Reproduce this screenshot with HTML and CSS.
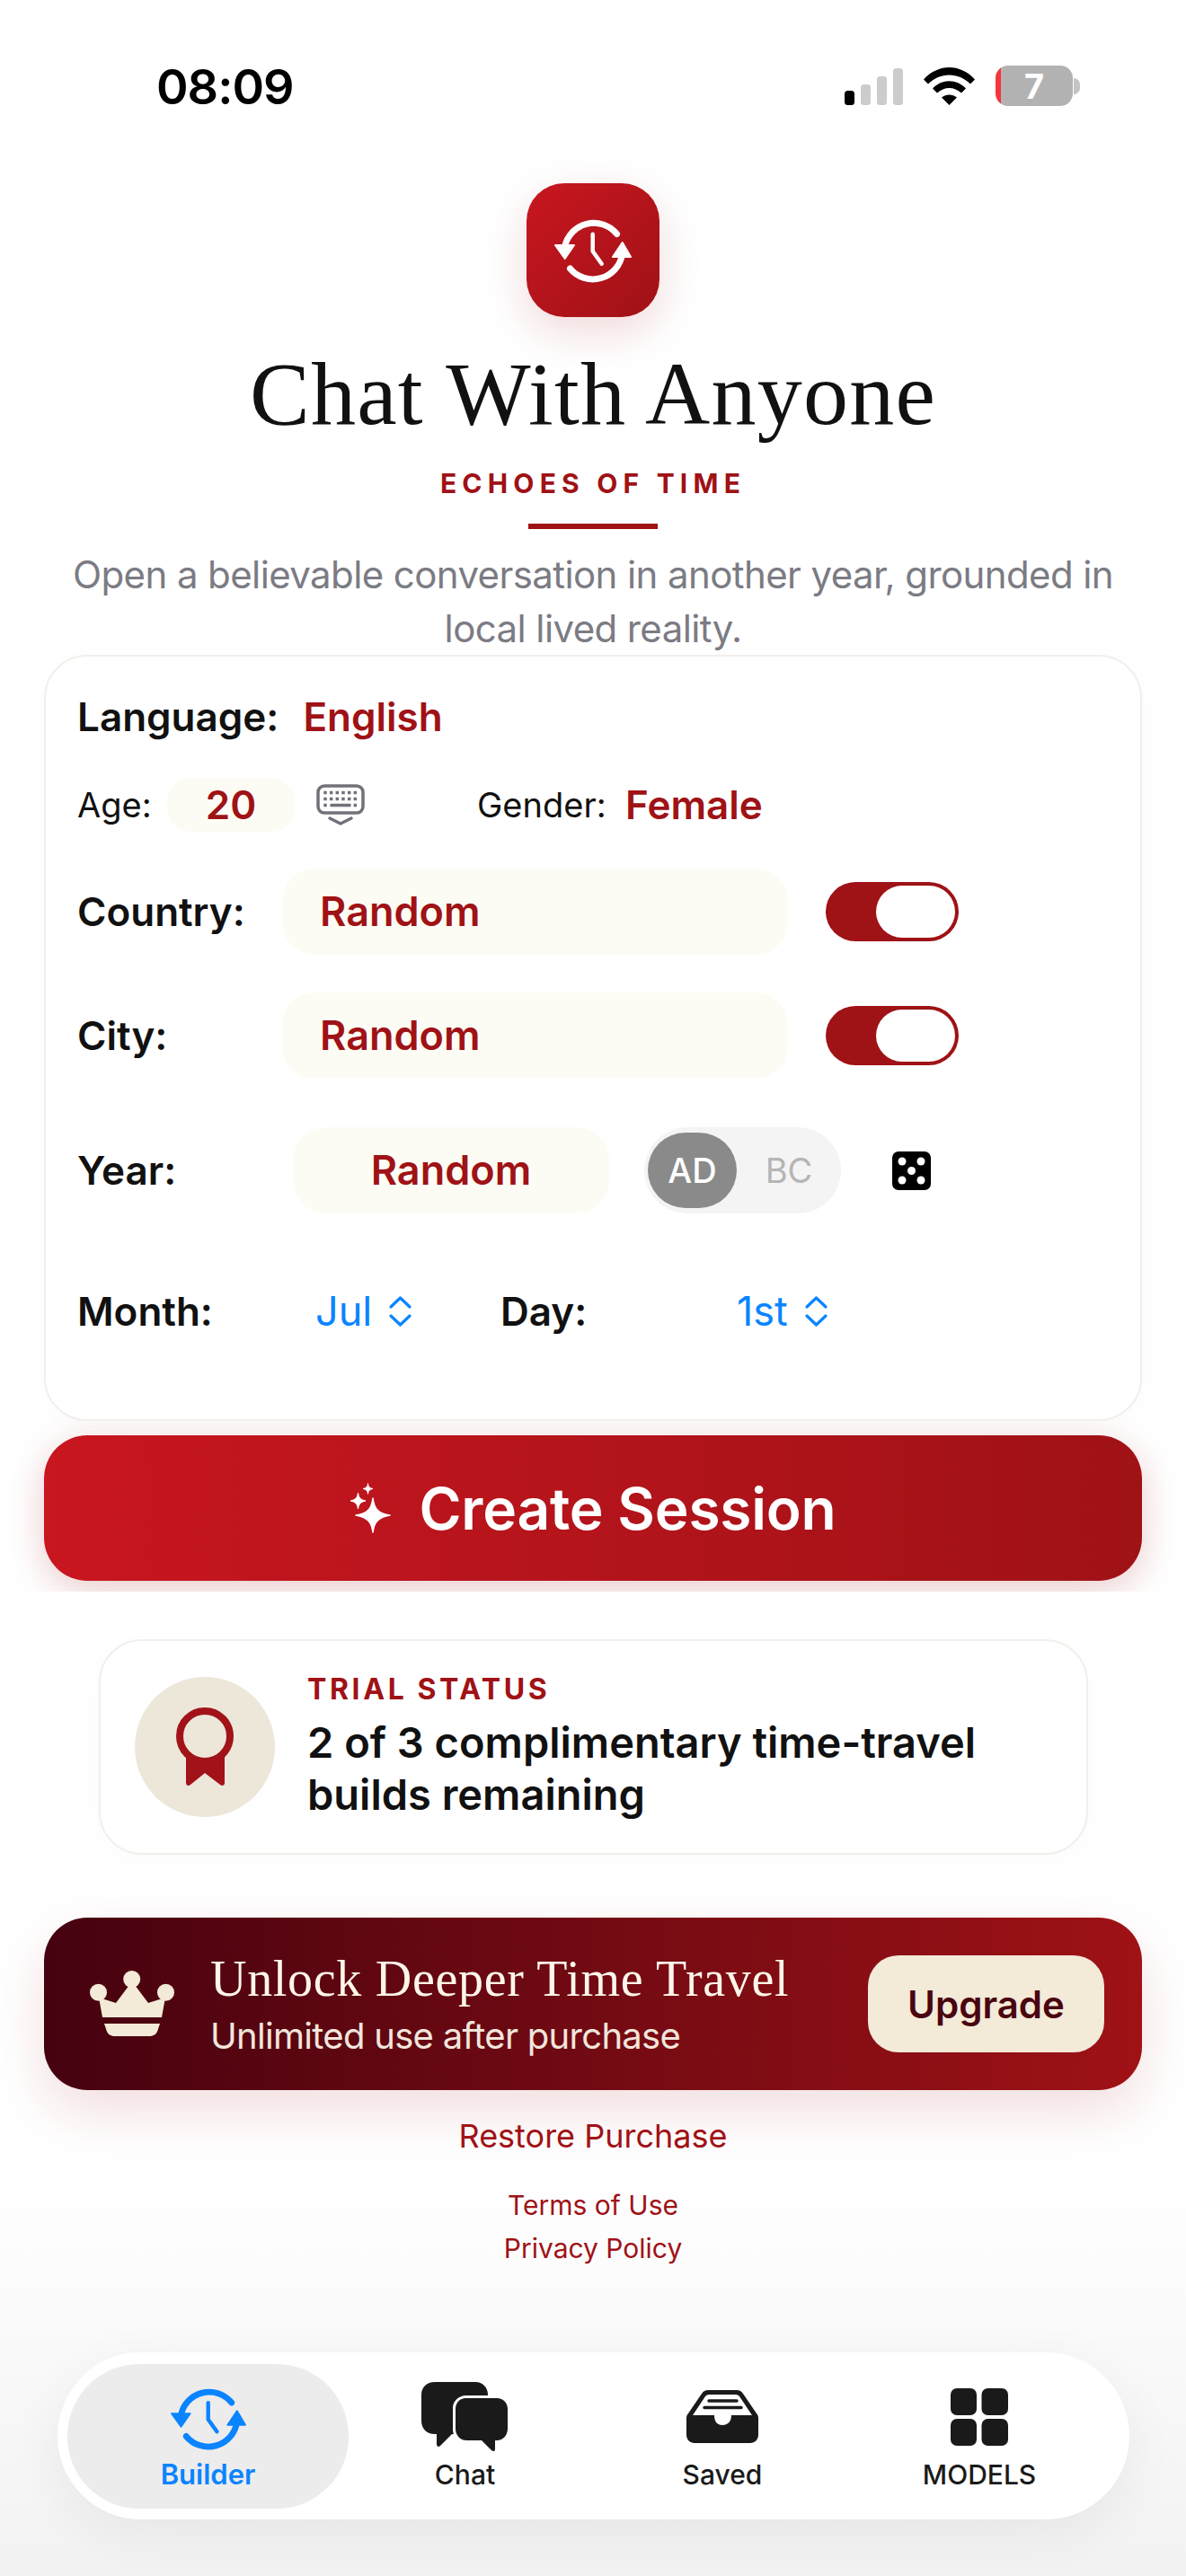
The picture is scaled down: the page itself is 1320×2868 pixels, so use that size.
FILE: index.html
```html
<!DOCTYPE html>
<html lang="en">
<head>
<meta charset="utf-8">
<title>Chat With Anyone</title>
<link rel="stylesheet" href="styles.css">
</head>
<body>
<svg class="defs" width="0" height="0" aria-hidden="true">
  <symbol id="history" viewBox="0 0 86 74">
    <path d="M69.5 18.5A33 33 0 0 0 11.5 33M17.5 57A33 33 0 0 0 75.5 41" fill="none" stroke="currentColor" stroke-width="7" stroke-linecap="round"/>
    <path d="M42.7 18.7V37.7L52.7 51.7" fill="none" stroke="currentColor" stroke-width="4.5" stroke-linecap="round" stroke-linejoin="round"/>
    <path d="M1 31H22L11.7 46ZM65 44H85L75.7 28Z" fill="currentColor" stroke="currentColor" stroke-width="2" stroke-linejoin="round"/>
  </symbol>
  <symbol id="chev" viewBox="0 0 27 36">
    <path d="M3 13L13.500 3L24 13M3 23L13.500 33L24 23" fill="none" stroke="currentColor" stroke-width="3.200" stroke-linecap="round" stroke-linejoin="round"/>
  </symbol>
  <symbol id="kb" viewBox="0 0 54 46">
    <rect x="2" y="2" width="50" height="30" rx="7" fill="none" stroke="#71717a" stroke-width="3.500"/>
    <path d="M8.250 9.500H46M8.250 16.500H46" stroke="#71717a" stroke-width="3.500" stroke-dasharray="3.500 3.170"/>
    <path d="M8.250 23.500H11.750M15.500 23.500H38.500M41.600 23.500H45.100" stroke="#71717a" stroke-width="3.500"/>
    <path d="M15 38L27 44L39 38" fill="none" stroke="#71717a" stroke-width="3.500" stroke-linecap="round" stroke-linejoin="round"/>
  </symbol>
</svg>
<main class="screen">
  <div class="top">
    <header class="status">
      <span class="clock">08:09</span>
      <div class="status-icons">
        <svg class="signal" width="65" height="41" viewBox="0 0 65 41">
          <rect x="0" y="25" width="11" height="16" rx="3.500" fill="#000"/>
          <rect x="18" y="18" width="11" height="23" rx="3.500" fill="#ccc"/>
          <rect x="36" y="9" width="11" height="32" rx="3.500" fill="#ccc"/>
          <rect x="54" y="0" width="11" height="41" rx="3.500" fill="#ccc"/>
        </svg>
        <svg class="wifi" width="57" height="42" viewBox="0 0 57 42">
          <path d="M0 13.500C16 -4.500 41 -4.500 57 13.500L52 18.500C39 5 18 5 5 18.500Z" fill="#000"/>
          <path d="M10 23.500C20 12.500 37 12.500 47 23.500L42 28.500C34 21 23 21 15 28.500Z" fill="#000"/>
          <path d="M20 33.500C25 29.500 32 29.500 37 33.500L28.500 42Z" fill="#000"/>
        </svg>
        <div class="battery">
          <div class="batt-body"><span class="batt-num">7</span></div>
          <span class="batt-cap"></span>
        </div>
      </div>
    </header>

    <section class="hero">
      <div class="app-icon"><svg width="86" height="74"><use href="#history"/></svg></div>
      <h1 class="title">Chat With Anyone</h1>
      <p class="eyebrow">ECHOES OF TIME</p>
      <div class="rule"></div>
      <p class="sub">Open a believable conversation in another year, grounded in local lived reality.</p>
    </section>

    <section class="card">
      <div class="row lang-row">
        <span class="lbl">Language:</span>
        <span class="val lang-val">English</span>
      </div>
      <div class="row age-row">
        <span class="lbl-sm age-lbl">Age:</span>
        <span class="pill age-pill val">20</span>
        <svg class="kb" width="54" height="46"><use href="#kb"/></svg>
        <span class="lbl-sm gender-lbl">Gender:</span>
        <span class="val gender-val">Female</span>
      </div>
      <div class="row place-row country-row">
        <span class="lbl place-lbl">Country:</span>
        <span class="pill place-pill val">Random</span>
        <span class="toggle"><span class="knob"></span></span>
      </div>
      <div class="row place-row city-row">
        <span class="lbl place-lbl">City:</span>
        <span class="pill place-pill val">Random</span>
        <span class="toggle"><span class="knob"></span></span>
      </div>
      <div class="row year-row">
        <span class="lbl year-lbl">Year:</span>
        <span class="pill year-pill val">Random</span>
        <div class="era"><span class="era-on">AD</span><span class="era-off">BC</span></div>
        <svg class="die" width="43" height="43" viewBox="0 0 43 43">
          <rect width="43" height="43" rx="7" fill="#000"/>
          <circle cx="11" cy="11" r="4.500" fill="#fff"/><circle cx="32" cy="11" r="4.500" fill="#fff"/>
          <circle cx="21.500" cy="21.500" r="4.500" fill="#fff"/>
          <circle cx="11" cy="32" r="4.500" fill="#fff"/><circle cx="32" cy="32" r="4.500" fill="#fff"/>
        </svg>
      </div>
      <div class="row date-row">
        <span class="lbl month-lbl">Month:</span>
        <span class="pick month-pick">Jul<svg width="27" height="36"><use href="#chev"/></svg></span>
        <span class="lbl day-lbl">Day:</span>
        <span class="pick">1st<svg width="27" height="36"><use href="#chev"/></svg></span>
      </div>
    </section>

    <button class="create">
      <svg width="46" height="56" viewBox="0 0 46 56">
        <path d="M26 17C27.500 29 32 34 45 36C32 38.500 27.500 43 26 55C24.500 43 20 38.500 7 36C20 34 24.500 29 26 17Z" fill="#fff" stroke="#fff" stroke-width="1.500" stroke-linejoin="round"/>
        <path d="M9.500 11C10.200 16 12 18.800 18 20C12 21.200 10.200 24 9.500 29C8.800 24 7 21.200 1 20C7 18.800 8.800 16 9.500 11Z" fill="#fff" stroke="#fff" stroke-linejoin="round"/>
        <path d="M20.500 0.500C21 4 22 5.500 26 6.500C22 7.500 21 9 20.500 12.500C20 9 19 7.500 15 6.500C19 5.500 20 4 20.500 0.500Z" fill="#fff" stroke="#fff" stroke-width=".8" stroke-linejoin="round"/>
      </svg>
      <span>Create Session</span>
    </button>
  </div>

  <section class="trial">
    <div class="medal">
      <svg width="66" height="88" viewBox="0 0 66 88">
        <path d="M12 48H55V84C55 87 52 88 50 86L33 73L17 86C15 88 12 87 12 84Z" fill="#a11318"/>
        <circle cx="33" cy="32" r="28" fill="#ede7da" stroke="#a11318" stroke-width="8"/>
      </svg>
    </div>
    <div class="trial-text">
      <p class="trial-head">TRIAL STATUS</p>
      <p class="trial-body">2 of 3 complimentary time-travel builds remaining</p>
    </div>
  </section>

  <section class="upgrade">
    <svg class="crown" width="94" height="74" viewBox="0 0 94 74">
      <circle cx="46.700" cy="9.500" r="9.500" fill="#f3ead8"/><circle cx="9.500" cy="24.300" r="9.500" fill="#f3ead8"/><circle cx="84.500" cy="24.300" r="9.500" fill="#f3ead8"/>
      <path d="M10 30L29 36L47 12L65 36L84 30L80 52H14Z" fill="#f3ead8"/>
      <path d="M16 59H78L76 65C74.500 71 71 73 66 73H28C23 73 19.500 71 18 65Z" fill="#f3ead8"/>
    </svg>
    <div class="up-text">
      <p class="up-title">Unlock Deeper Time Travel</p>
      <p class="up-sub">Unlimited use after purchase</p>
    </div>
    <span class="up-btn">Upgrade</span>
  </section>

  <a class="restore">Restore Purchase</a>
  <a class="legal legal-first">Terms of Use</a>
  <a class="legal">Privacy Policy</a>

  <nav class="tabs">
    <div class="tab tab-active">
      <svg width="84" height="72"><use href="#history"/></svg>
      <span>Builder</span>
    </div>
    <div class="tab tab-chat">
      <svg width="97" height="78" viewBox="0 0 97 78">
        <path d="M15 0H60C68 0 74 6 74 14V45C74 53 68 58 60 58H34L21 71C19 73 17 72 17 69V58H15C6 58 0 52 0 43V14C0 6 6 0 15 0Z" fill="#1a1a1a"/>
        <path d="M50 15H84C92 15 98 21 98 29V53C98 61 92 67 84 67H83V75C83 78 80 79 78 77L67 67H50C42 67 35 61 35 53V29C35 21 42 15 50 15Z" fill="#fff"/>
        <path d="M50 18H84C91 18 96 23 96 30V52C96 59 91 65 84 65H82V75C82 77 80 78 78 76L67 65H50C43 65 38 59 38 52V30C38 23 43 18 50 18Z" fill="#1a1a1a"/>
      </svg>
      <span>Chat</span>
    </div>
    <div class="tab tab-saved">
      <svg width="80" height="59" viewBox="0 0 80 59">
        <path d="M24 0H56C59 0 61 1 63 4L78 26C79.500 28 80 29 80 31V50C80 55 76 59 71 59H9C4 59 0 55 0 50V31C0 29 .5 28 2 26L17 4C19 1 21 0 24 0Z" fill="#1a1a1a"/>
        <path d="M25 5H55C57 5 58 6 59 7L73 28H50C50 35 46 39 40 39C34 39 31 35 31 28H7L21 7C22 6 23 5 25 5Z" fill="#fff"/>
        <path d="M25 12H56M20 19.500H61" stroke="#1a1a1a" stroke-width="3.500" stroke-linecap="round"/>
      </svg>
      <span>Saved</span>
    </div>
    <div class="tab tab-models">
      <svg width="64" height="64" viewBox="0 0 64 64">
        <rect width="29" height="30" rx="7" fill="#1a1a1a"/><rect x="34.500" width="29.500" height="30" rx="7" fill="#1a1a1a"/>
        <rect y="34" width="29" height="30" rx="7" fill="#1a1a1a"/><rect x="34.500" y="34" width="29.500" height="30" rx="7" fill="#1a1a1a"/>
      </svg>
      <span>MODELS</span>
    </div>
  </nav>
</main>
</body>
</html>
```

FILE: styles.css
```css
* { box-sizing: border-box; margin: 0; padding: 0; }
html, body { width: 1320px; height: 2868px; overflow: hidden; }
body { font-family: Inter, "Liberation Sans", sans-serif; background: #fff; color: #111; }
.defs { position: absolute; }
.screen {
  width: 1320px; height: 2868px; display: flex; flex-direction: column;
  background: linear-gradient(180deg, #fff 0, #fff 2420px, #f2f2f2 2868px);
}
.top { height: 1772px; overflow: hidden; flex: none; padding: 0 49px; }

.status { height: 204px; padding: 69px 69px 0 125px; display: flex; justify-content: space-between; align-items: flex-start; }
.clock { font-size: 54px; line-height: 56px; font-weight: 600; color: #000; letter-spacing: -1px; }
.status-icons { display: flex; align-items: flex-start; padding-top: 5px; }
.signal { margin-top: 2px; }
.wifi { margin-left: 23px; margin-top: 1px; }
.battery { display: flex; align-items: center; margin-left: 23px; }
.batt-body { width: 86px; height: 45px; border-radius: 14px; background: linear-gradient(90deg, #f4363a 6px, #b2b2b2 6px); display: flex; justify-content: center; align-items: center; margin-top: -1px; }
.batt-num { color: #fff; font-size: 38px; font-weight: 700; line-height: 44px; }
.batt-cap { width: 7px; height: 18px; background: #c4c4c4; border-radius: 0 9px 9px 0; margin-left: 1px; }

.hero { display: flex; flex-direction: column; align-items: center; }
.app-icon {
  width: 148px; height: 149px; border-radius: 42px; display: flex; align-items: center; justify-content: center; color: #fff;
  background: linear-gradient(135deg, #c91620, #9f1216);
  box-shadow: 0 16px 48px rgba(160, 20, 25, .16);
}
.title { font-family: "Liberation Serif", serif; font-weight: 400; font-size: 100px; line-height: 110px; margin-top: 31px; color: #111; white-space: nowrap; letter-spacing: 1.25px; }
.eyebrow { font-size: 30px; line-height: 36px; font-weight: 700; letter-spacing: 6.2px; color: #9f1216; margin-top: 26px; }
.rule { width: 144px; height: 6px; background: #9f1216; margin-top: 27px; }
.sub { font-size: 42px; line-height: 60px; color: #7b7b83; text-align: center; width: 1222px; margin-top: 21px; letter-spacing: -.6px; }

.card {
  height: 853px; margin-top: -1px; padding: 37px 35px 0; background: #fff;
  border: 2px solid #f2efea; border-radius: 48px; box-shadow: 0 4px 30px rgba(0, 0, 0, .02);
  position: relative;
}
.row { display: flex; align-items: center; }
.lbl { font-size: 44px; font-weight: 600; color: #111; line-height: 60px; }
.lbl-sm { font-size: 38px; font-weight: 400; color: #111; line-height: 60px; }
.val { font-size: 44px; font-weight: 600; color: #9f1216; line-height: 60px; }
.pill { background: #fdfcf4; display: flex; align-items: center; justify-content: center; }
.place-pill, .year-pill { font-size: 45px; }

.lang-row { height: 60px; }
.lang-val { margin-left: 27px; }
.age-row { height: 60px; margin-top: 38px; }
.age-lbl { width: 100px; }
.age-pill { width: 142px; height: 60px; border-radius: 26px; }
.kb { margin-left: 24px; }
.gender-lbl { margin-left: 125px; width: 165px; }

.place-row { height: 96px; }
.country-row { margin-top: 41px; }
.city-row { margin-top: 42px; }
.place-lbl { width: 228px; }
.place-pill { width: 563px; height: 96px; border-radius: 36px; justify-content: flex-start; padding-left: 42px; }
.toggle { width: 148px; height: 66px; border-radius: 33px; margin-left: 42px; background: #9f1216; padding: 4px; display: flex; justify-content: flex-end; }
.knob { width: 88px; height: 58px; border-radius: 29px; background: #fff; }

.year-row { height: 96px; margin-top: 54px; }
.year-lbl { width: 240px; }
.year-pill { width: 352px; height: 96px; border-radius: 36px; }
.era { width: 219px; height: 96px; margin-left: 39px; border-radius: 48px; background: #f4f4f4; display: flex; align-items: center; padding-left: 4px; }
.era-on { width: 99px; height: 84px; border-radius: 42px; background: #8a8a8a; color: #fff; font-size: 38px; font-weight: 500; display: flex; align-items: center; justify-content: center; }
.era-off { flex: 1; text-align: center; font-size: 38px; color: #b5b5b5; }
.die { margin-left: 57px; }

.date-row { height: 60px; margin-top: 79px; }
.month-lbl { width: 265px; }
.pick { display: flex; align-items: center; gap: 18px; font-size: 45px; color: #0a84ff; line-height: 60px; }
.month-pick { width: 206px; }
.day-lbl { width: 263px; }

.create {
  width: 1222px; height: 162px; margin-top: 16px; border: 0; border-radius: 48px; color: #fff;
  background: linear-gradient(90deg, #c91620, #9f1216);
  box-shadow: 0 10px 40px rgba(160, 20, 25, .22);
  display: flex; align-items: center; justify-content: center; gap: 31px;
  font-family: inherit; font-size: 64px; font-weight: 600; letter-spacing: -.2px;
}

.trial {
  width: 1101px; height: 240px; margin: 53px 0 0 110px; flex: none; background: #fff;
  border: 2px solid #f2efea; border-radius: 48px; display: flex; align-items: center; padding-left: 38px;
  box-shadow: 0 6px 30px rgba(0, 0, 0, .02);
}
.medal { width: 156px; height: 156px; border-radius: 50%; background: #ede7da; display: flex; align-items: center; justify-content: center; flex: none; }
.trial-text { margin-left: 36px; }
.trial-head { font-size: 32px; line-height: 36px; font-weight: 700; letter-spacing: 3.6px; color: #9f1216; }
.trial-body { font-size: 47px; line-height: 58px; font-weight: 600; color: #111; margin-top: 12px; width: 800px; }

.upgrade {
  width: 1222px; height: 192px; margin: 70px 0 0 49px; flex: none; border-radius: 48px;
  background: linear-gradient(90deg, #45020f, #9f1216);
  box-shadow: 0 24px 60px rgba(160, 20, 25, .14);
  display: flex; align-items: center; padding: 0 42px 0 51px;
}
.up-text { margin-left: 40px; flex: 1; }
.up-title { font-family: "Liberation Serif", serif; font-size: 56px; line-height: 66px; color: #fdf6ea; white-space: nowrap; letter-spacing: .7px; }
.up-sub { font-size: 40px; line-height: 50px; color: #f2e5dc; margin-top: 6px; letter-spacing: -.7px; }
.up-btn { width: 263px; height: 108px; border-radius: 34px; background: #f3ead8; color: #4a0510; font-size: 42px; font-weight: 600; display: flex; align-items: center; justify-content: center; }

.restore, .legal { display: block; text-align: center; color: #9f1216; flex: none; }
.restore { font-size: 36px; line-height: 46px; margin-top: 28px; }
.legal { font-size: 30px; line-height: 48px; }
.legal-first { margin-top: 30px; }

.tabs {
  width: 1193px; height: 186px; margin: 92px 0 0 64px; flex: none; border-radius: 93px; background: #fff;
  box-shadow: 0 16px 60px rgba(0, 0, 0, .06);
  position: relative; display: flex; align-items: flex-start;
}
.tab { display: flex; flex-direction: column; align-items: center; font-size: 30px; font-weight: 500; color: #1a1a1a; height: 161px; position: relative; }
.tab span { position: absolute; top: 105px; line-height: 36px; white-space: nowrap; }
.tab-active { width: 313px; margin: 13px 0 0 11px; background: #ececec; border-radius: 80px; color: #0a84ff; padding-top: 25px; }
.tab-active span { font-weight: 600; font-size: 31px; }
.tab-chat { width: 97px; margin: 13px 0 0 81px; padding-top: 20px; }
.tab-saved { width: 80px; margin: 13px 0 0 198px; padding-top: 29px; }
.tab-models { width: 64px; margin: 13px 0 0 214px; padding-top: 27px; }
```
